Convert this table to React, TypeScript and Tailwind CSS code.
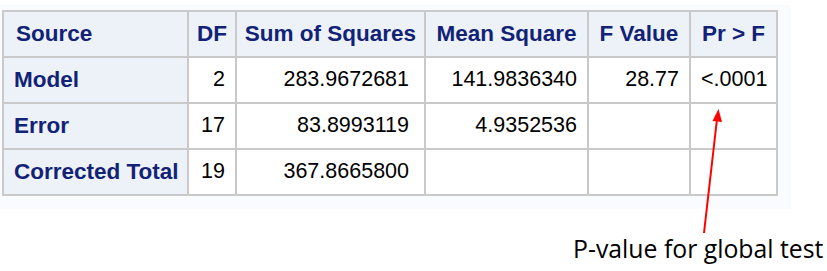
import React from 'react';

type Row = {
  source: string;
  df: string;
  ss: string;
  ms: string;
  f: string;
  p: string;
};

const rows: Row[] = [
  { source: 'Model', df: '2', ss: '283.9672681', ms: '141.9836340', f: '28.77', p: '<.0001' },
  { source: 'Error', df: '17', ss: '83.8993119', ms: '4.9352536', f: '', p: '' },
  { source: 'Corrected Total', df: '19', ss: '367.8665800', ms: '', f: '', p: '' },
];

const th = 'h-[46px] whitespace-nowrap border-2 border-[#c9c9c9] bg-[#edf2f9] px-[6px] text-center text-[22.5px] font-bold text-[#112277]';
const td = 'h-[46px] border-2 border-[#c9c9c9] bg-white px-[10px] text-right text-[21.5px] text-black';

const App = () => {
  return (
    <div className="relative h-[271px] w-[827px] bg-white font-['Liberation_Sans',Arial,sans-serif]">
      <div className="mt-[5px] w-[791px] bg-[#fafbfe] pb-[13px] pl-[2px] pt-[5px]">
        <table className="w-[774px] table-fixed border-collapse leading-none">
          <colgroup>
            <col className="w-[185px]" />
            <col className="w-[48px]" />
            <col className="w-[189px]" />
            <col className="w-[163px]" />
            <col className="w-[102px]" />
            <col className="w-[87px]" />
          </colgroup>
          <thead>
            <tr>
              <th className={th + ' !text-left !pl-[12px]'}>Source</th>
              <th className={th}>DF</th>
              <th className={th}>Sum of Squares</th>
              <th className={th}>Mean Square</th>
              <th className={th}>F Value</th>
              <th className={th}>Pr &gt; F</th>
            </tr>
          </thead>
          <tbody>
            {rows.map((r) => (
              <tr key={r.source}>
                <th className={th + ' !text-left !pl-[10px]'}>{r.source}</th>
                <td className={td}>{r.df}</td>
                <td className={td + ' pr-[15px]'}>{r.ss}</td>
                <td className={td}>{r.ms}</td>
                <td className={td}>{r.f}</td>
                <td className={td}>{r.p}</td>
              </tr>
            ))}
          </tbody>
        </table>
      </div>

      {/* annotation arrow */}
      <svg className="absolute left-0 top-0" width="827" height="271" viewBox="0 0 827 271">
        <line x1="704" y1="228" x2="717" y2="114" stroke="#ff0000" strokeWidth="2" />
        <polygon points="718.5,104 712.5,116 722,117" fill="#ff0000" />
      </svg>

      <div className="pl-[573px] pt-[27px] font-['Open_Sans',sans-serif] text-[24.8px] leading-none text-black">
        P-value for global test
      </div>
    </div>
  );
};

export default App;
